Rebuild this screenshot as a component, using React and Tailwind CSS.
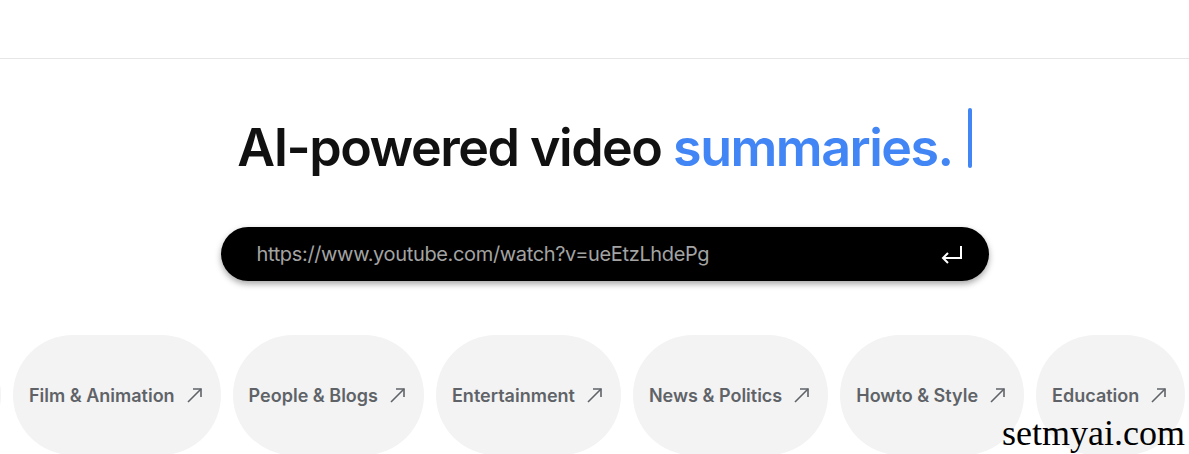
const categories = [
  "Film & Animation",
  "People & Blogs",
  "Entertainment",
  "News & Politics",
  "Howto & Style",
  "Education",
];

function EnterIcon() {
  return (
    <svg width="24" height="22" viewBox="0 0 24 22" fill="none" stroke="white" strokeWidth="2">
      <path d="M21 3v12H3" />
      <path d="M8 10l-5 5 5 5" />
    </svg>
  );
}

function NorthEast() {
  return (
    <svg width="15" height="15" viewBox="0 0 15 15" fill="none" stroke="#5f6368" strokeWidth="1.6">
      <path d="M1 14L14 1" />
      <path d="M6 1h8v8" />
    </svg>
  );
}

export default function App() {
  return (
    <div
      className="relative min-h-screen w-full overflow-hidden bg-white"
      style={{ fontFamily: "Inter, 'Noto Sans', sans-serif" }}
    >
      {/* header */}
      <header className="h-[59px] border-b border-[#e6e6e6]" />

      {/* headline */}
      <div className="flex justify-center pl-[20px] pt-[49px]">
        <div className="flex items-start">
          <h1 className="text-[52px] font-semibold leading-[80px] tracking-[-1.5px] text-[#111]">
            AI-powered video <span className="text-[#4285f4]">summaries.</span>
          </h1>
          <span className="ml-[15px] block h-[60px] w-[4px] rounded-sm bg-[#4285f4]" />
        </div>
      </div>

      {/* url input */}
      <div className="mt-[39px] flex justify-center pl-[20px]">
        <div className="flex h-[54px] w-[768px] items-center justify-between rounded-full bg-black pl-9 pr-[25px] shadow-[0_3px_6px_rgba(0,0,0,0.35)]">
          <span className="text-[20px] tracking-[-0.35px] text-[#a3a3a3]">
            https://www.youtube.com/watch?v=ueEtzLhdePg
          </span>
          <EnterIcon />
        </div>
      </div>

      {/* categories */}
      <div className="mt-[54px] flex gap-[12px] -ml-[199px]">
        <div className="h-[120px] w-[200px] shrink-0 rounded-full bg-[#f3f3f3]" />
        {categories.map((c) => (
          <div
            key={c}
            className="flex h-[120px] shrink-0 items-center gap-3 rounded-full bg-[#f3f3f3] pl-4 pr-[19px]"
          >
            <span className="text-[18px] font-semibold text-[#5f6368]">{c}</span>
            <NorthEast />
          </div>
        ))}
      </div>

      {/* watermark */}
      <span
        className="absolute right-[4px] top-[411px] text-[36px] leading-[44px] text-black"
        style={{ fontFamily: "'Liberation Serif', serif" }}
      >
        setmyai.com
      </span>
    </div>
  );
}
